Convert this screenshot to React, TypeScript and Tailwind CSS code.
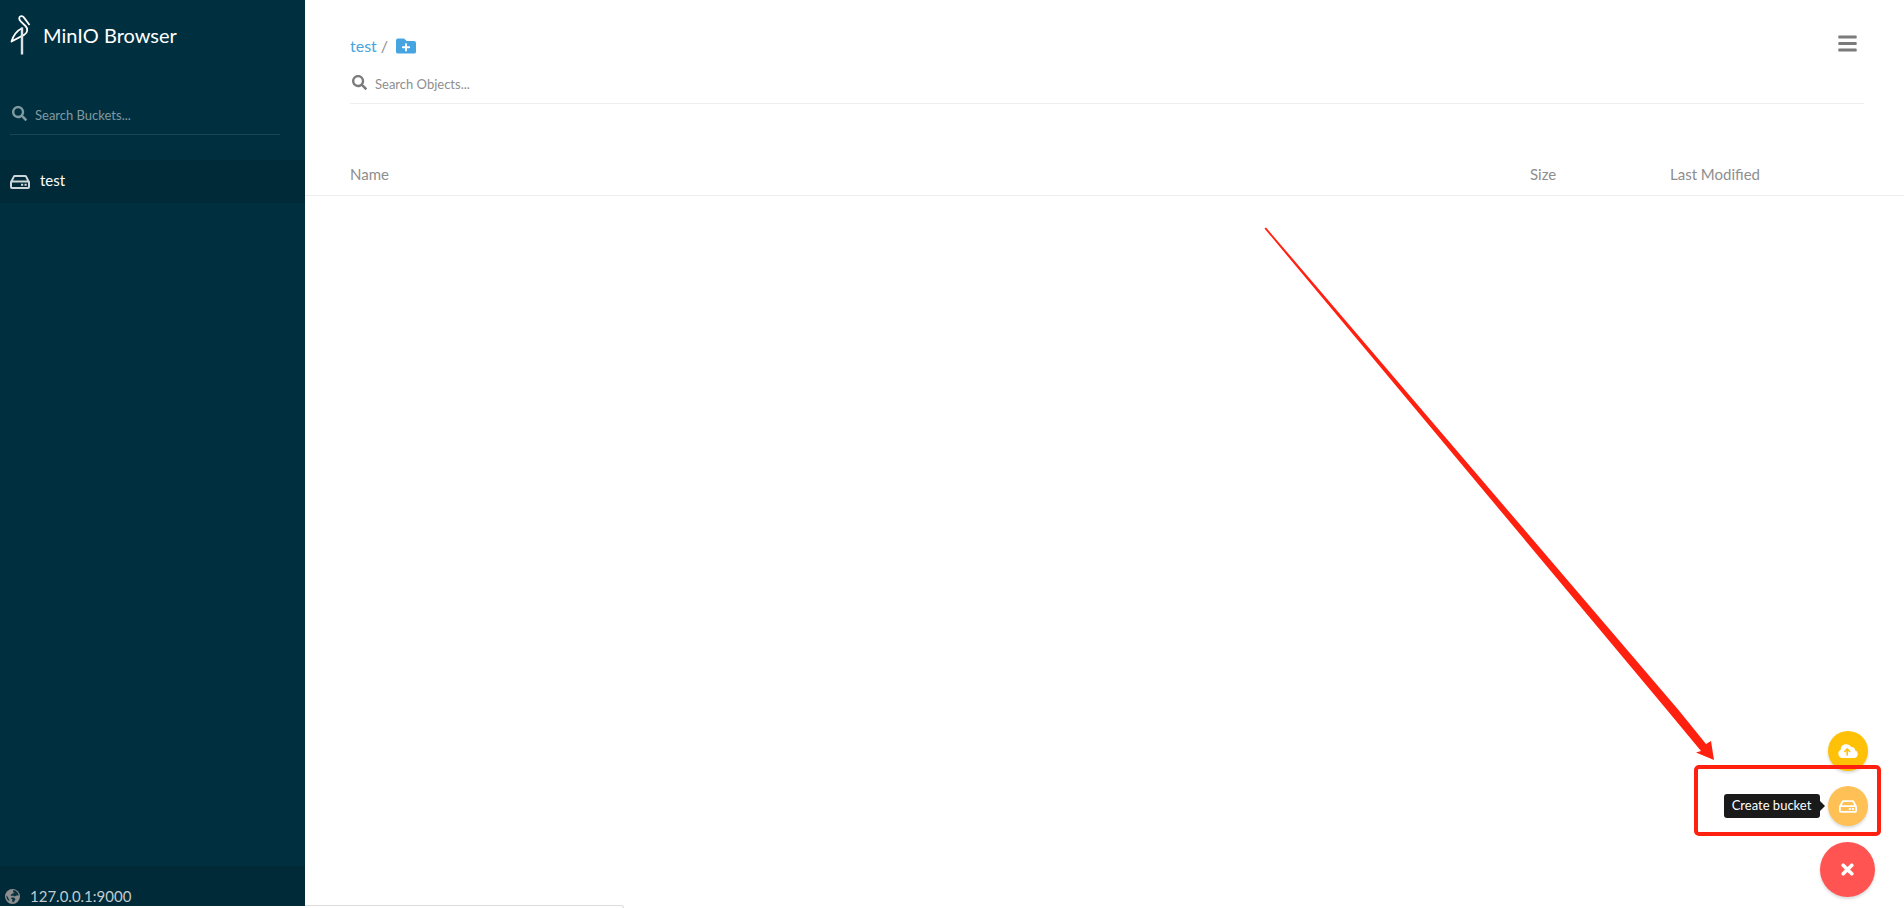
import { useState } from "react";
import { FaBars, FaFolderPlus, FaSearch } from "react-icons/fa";

const buckets = ["test"];

function Logo() {
  return (
    <svg width="22" height="42" viewBox="0 0 22 42" fill="none" stroke="#fff" strokeWidth="1.8" strokeLinejoin="round">
      <path d="M19.500 11L14 3.600C12.500 1.400 9.300 1.800 9.200 4.200C9.100 5.600 10 6.600 11 7.600L15.500 12C18.300 14.800 17.500 18.700 14.500 20.600L1.500 27.500C3.500 21 7 16.500 12.500 14" />
      <path d="M12 13.500V40.500" strokeWidth="2.400" stroke="#dde3e5" />
    </svg>
  );
}

function DriveIcon({ className }: { className: string }) {
  return (
    <svg viewBox="0 0 20 14" className={className} fill="none" stroke="currentColor" strokeWidth="2" strokeLinejoin="round">
      <rect x="1" y="6.500" width="18" height="6.500" rx="1" />
      <path d="M1.200 7L3.700 1.900Q4.100 1 5 1H15Q15.900 1 16.300 1.900L18.800 7" />
      <path d="M11 9.800h2.200M14.500 9.800h2.200" />
    </svg>
  );
}

function GlobeIcon() {
  return (
    <svg width="15" height="15" viewBox="0 0 15 15" className="mb-0.5">
      <circle cx="7.500" cy="7.500" r="7.500" fill="#8e8e8e" />
      <path
        d="M8 1.200L10.500 1.500L13 4L13.700 6.500L11.500 6.500L9.500 7.500L8 6.500L6.500 7L5.500 6L7.500 4.500L9.500 4L8 3ZM6.500 8.500L9 8.500L10.500 10L9.500 12L8 13.500L7 12L7.500 10.500L6 9.500ZM1.200 6.500L2.500 7.500L3.500 9.500L4.500 11.500L4 12L2 10Z"
        fill="#0a3340"
      />
    </svg>
  );
}

function CloudIcon() {
  return (
    <svg width="20" height="14" viewBox="0 0 20 14">
      <path d="M4.500 14A4.400 4.400 0 0 1 2.700 5.700A5.600 5.600 0 0 1 13.200 3.100A3 3 0 0 1 17 6.200A4 4 0 0 1 16 14Z" fill="currentColor" />
      <path d="M9.200 11.500V5.800M6.300 8L9.200 5L12.100 8" fill="none" stroke="#ffc107" strokeWidth="1.600" />
    </svg>
  );
}

function Sidebar() {
  return (
    <aside className="flex w-[305px] shrink-0 flex-col bg-[#00303f] text-white">
      <div className="flex items-center gap-[11px] px-2.5 pt-3.5">
        <Logo />
        <h2 className="text-xl leading-6">MinIO Browser</h2>
      </div>
      <div className="mt-[42px] mr-[25px] ml-2.5 flex h-[37px] items-start gap-2 border-b border-white/10 pl-0.5">
        <FaSearch size={15} className="mt-2 text-[#809aa2]" />
        <input
          type="text"
          aria-label="Search Buckets"
          placeholder="Search Buckets..."
          className="mt-[5px] h-6 min-w-0 flex-1 bg-transparent text-[13px] outline-none placeholder:text-[#809aa2]"
        />
      </div>
      <ul className="mt-[25px]">
        {buckets.map((bucket) => (
          <li key={bucket} className="bg-[#002a37]">
            <a href="#" className="flex h-[43px] items-center gap-2.5 px-2.5 pb-0.5 text-[15px]">
              <DriveIcon className="mt-0.5 h-3.5 w-5 text-[#cdd7da]" />
              {bucket}
            </a>
          </li>
        ))}
      </ul>
      <div className="mt-auto flex h-10 items-end gap-2.5 bg-[#002a37] px-[5px] text-[15px] leading-5 text-[#bfcbcf]">
        <GlobeIcon />
        127.0.0.1:9000
      </div>
    </aside>
  );
}

function Header() {
  return (
    <header className="pt-[33px] pr-10 pl-[45px]">
      <div className="flex h-[26px] items-start justify-between">
        <div className="flex h-[26px] items-center text-base text-[#8e8e8e]">
          <a href="#" className="text-[#46a5e0]">test</a>
          <span className="mx-1">/</span>
          <button type="button" aria-label="Create new path" className="ml-1 text-[#46a5e0]">
            <FaFolderPlus size={20} />
          </button>
        </div>
        <button type="button" aria-label="Menu" className="mr-1.5 text-[#7b7b7b]">
          <FaBars size={21} />
        </button>
      </div>
      <div className="mt-2 flex h-[37px] items-start gap-2 border-b border-[#eee] pl-0.5">
        <FaSearch size={15} className="mt-2 text-[#7b7b7b]" />
        <input
          type="text"
          aria-label="Search Objects"
          placeholder="Search Objects..."
          className="mt-[5px] h-6 min-w-0 flex-1 bg-transparent text-[13px] outline-none placeholder:text-[#8e8e8e]"
        />
      </div>
    </header>
  );
}

function ObjectTable() {
  return (
    <table className="mt-[49px] w-full table-fixed text-left text-[15px] text-[#8e8e8e]">
      <thead>
        <tr className="h-[42px] border-b border-[#eee]">
          <th className="pl-[45px] font-normal">Name</th>
          <th className="w-[140px] font-normal">Size</th>
          <th className="w-[234px] font-normal">Last Modified</th>
        </tr>
      </thead>
      <tbody />
    </table>
  );
}

function Actions() {
  const [open, setOpen] = useState(true);

  return (
    <div className="absolute right-[29px] bottom-[9px] flex flex-col items-center">
      {open && (
        <>
          <button type="button" aria-label="Upload file" className="mb-[15px] flex size-10 items-center justify-center rounded-full bg-[#ffc107] text-white shadow-[0_2px_3px_rgba(0,0,0,0.15)]">
            <CloudIcon />
          </button>
          <div className="relative mb-4">
            <button type="button" aria-label="Create bucket" className="flex size-10 items-center justify-center rounded-full bg-[#ffc155] text-white shadow-[0_2px_3px_rgba(0,0,0,0.15)]">
              <DriveIcon className="h-[13px] w-[18px]" />
            </button>
            <div role="tooltip" className="absolute top-2 right-12 flex h-6 w-24 items-center justify-center rounded-[3px] bg-[#1a1a1a] text-[13px] whitespace-nowrap text-white">
              Create bucket
              <span className="absolute left-full border-y-[5px] border-l-[5px] border-y-transparent border-l-[#1a1a1a]" />
            </div>
          </div>
        </>
      )}
      <button
        type="button"
        aria-label="Toggle actions"
        onClick={() => setOpen(!open)}
        className="flex size-[55px] items-center justify-center rounded-full bg-[#ff5452] text-white shadow-[0_2px_3px_rgba(0,0,0,0.15)]"
      >
        <svg width="13" height="13" viewBox="0 0 13 13" stroke="currentColor" strokeWidth="3.600" strokeLinecap="round">
          <path d="M2.200 2.200L10.800 10.800M10.800 2.200L2.200 10.800" />
        </svg>
      </button>
    </div>
  );
}

function Annotation() {
  return (
    <div className="pointer-events-none absolute right-[23px] bottom-[70px]">
      <svg width="450" height="533" viewBox="0 0 450 533" className="absolute right-[167px] bottom-[76px] block max-w-none" fill="#ff2010">
        <path d="M0.500 1.500L403 483L437 524L432 525.500L450 533L447 514L442 517L414.500 483L2 0.500Z" />
      </svg>
      <div className="h-[71px] w-[187px] rounded-[5px] border-4 border-[#ff2010]" />
    </div>
  );
}

export default function App() {
  return (
    <div className="relative flex h-screen flex-col overflow-hidden bg-white pb-0.5 font-['Lato',sans-serif]">
      <div className="relative flex flex-1">
        <Sidebar />
        <main className="min-w-0 flex-1">
          <Header />
          <ObjectTable />
        </main>
        <Actions />
        <Annotation />
      </div>
      <div className="absolute bottom-0 left-[305px] h-[3px] w-[319px] rounded-tr border-t border-r border-[#ddd] bg-white" />
    </div>
  );
}
